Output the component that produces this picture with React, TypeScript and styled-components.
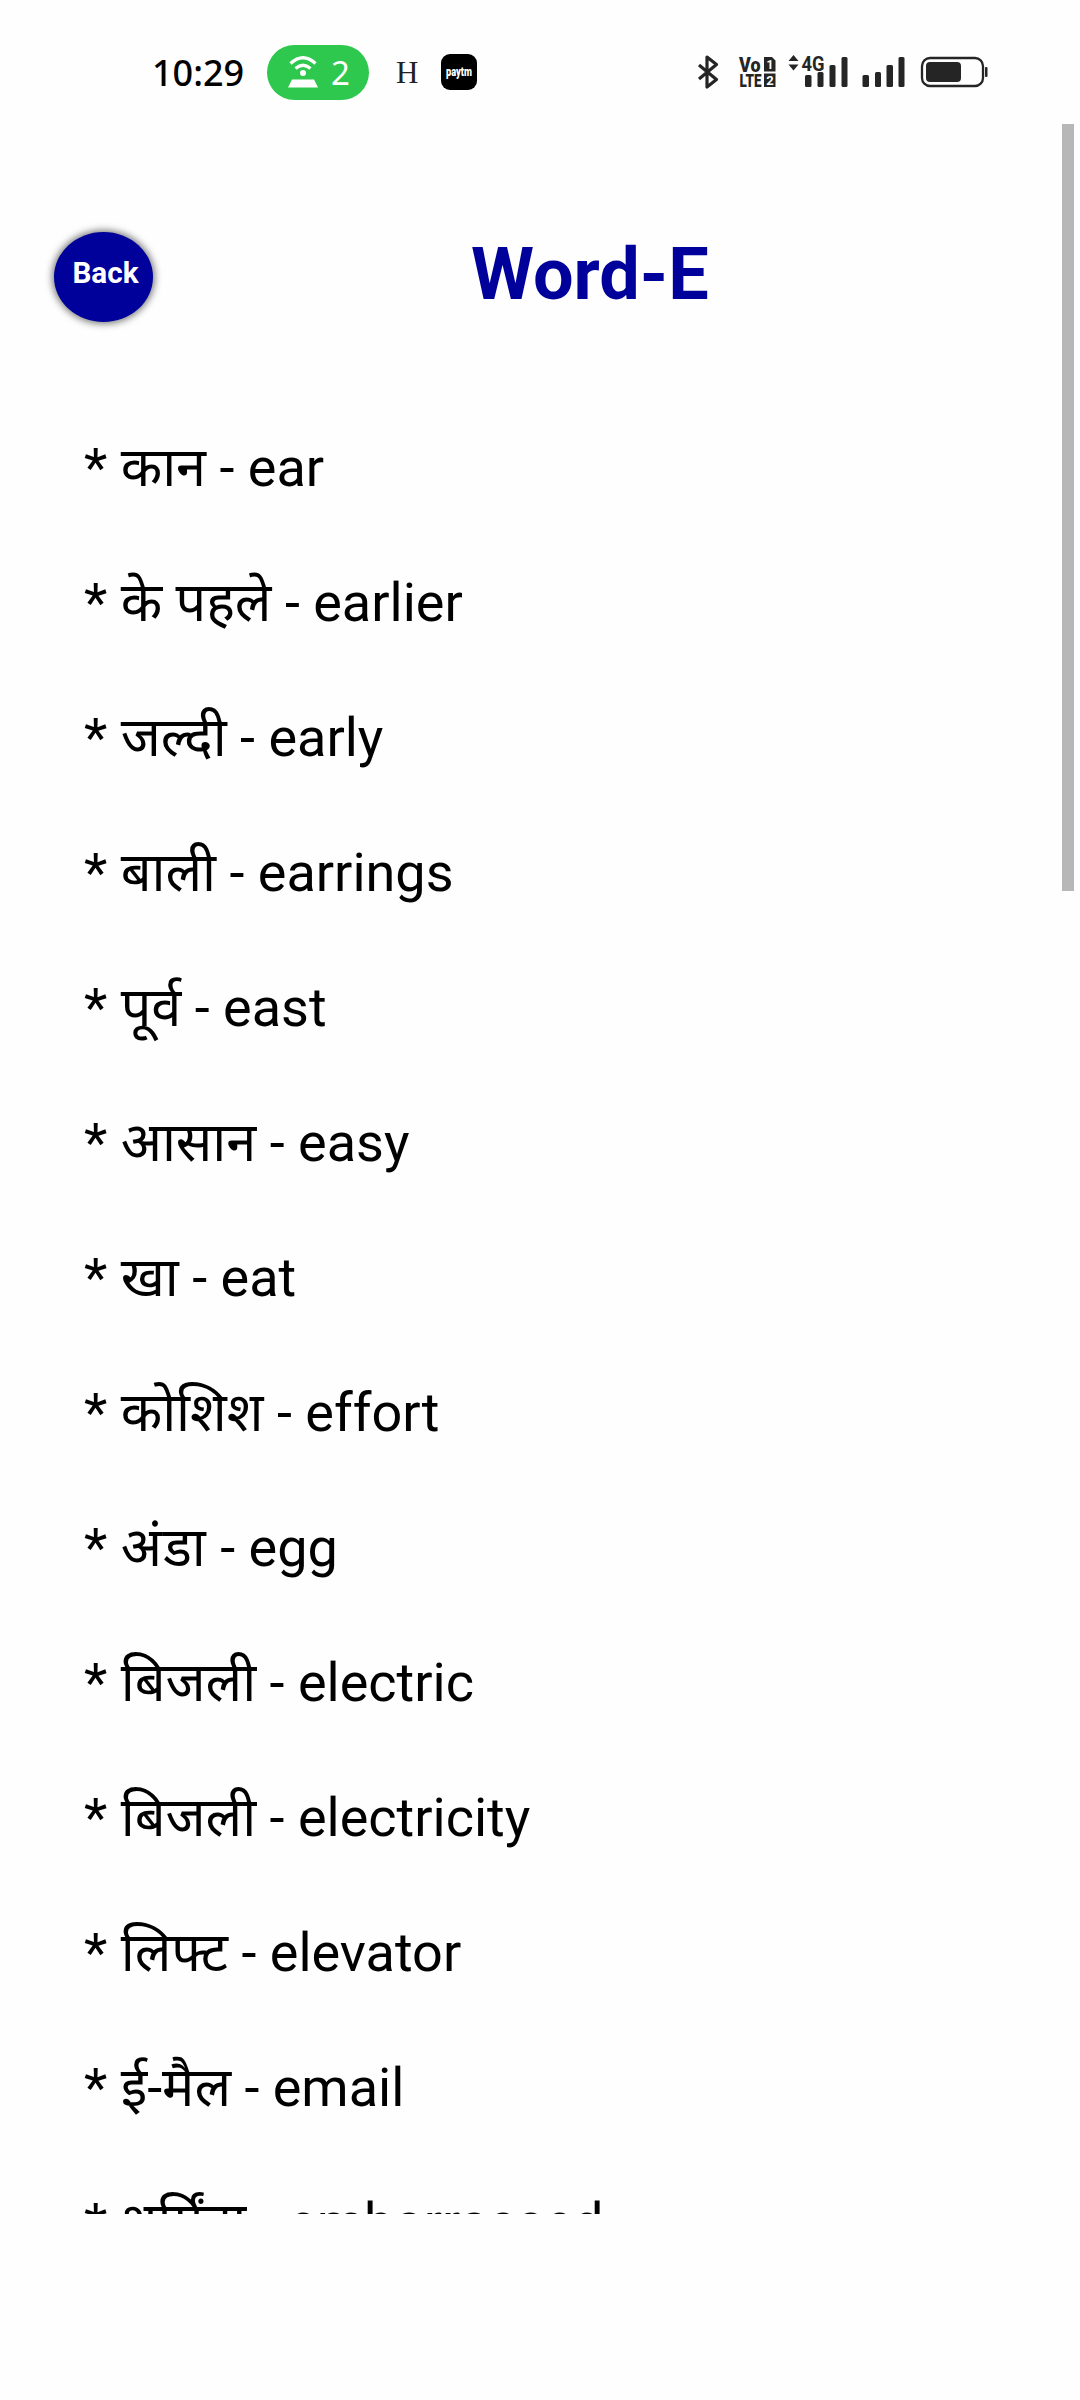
import React from "react";
import styled, { createGlobalStyle } from "styled-components";

const GlobalStyle = createGlobalStyle`
  * { box-sizing: border-box; }
  body { margin: 0; background: #fefefe; }
`;

const Screen = styled.div`
  display: flex;
  flex-direction: column;
  width: 1080px;
  height: 2400px;
  overflow: hidden;
  background: #fefefe;
  color: #000;
  font-family: Roboto, "Noto Sans", "Noto Sans Devanagari", sans-serif;
`;

const StatusBar = styled.header`
  display: flex;
  justify-content: space-between;
  height: 124px;
  padding: 45px 91px 0 152px;
`;

const StatusGroup = styled.div`
  display: flex;
  align-items: center;
  height: 54px;
`;

const Clock = styled.span`
  width: 95px;
  padding-top: 1px;
  font: 500 36px/54px "Noto Sans", sans-serif;
  white-space: nowrap;
`;

const HotspotPill = styled.span`
  display: flex;
  align-items: center;
  width: 102px;
  height: 55px;
  margin-left: 20px;
  padding-left: 20px;
  gap: 12px;
  border-radius: 28px;
  background: #2dc84d;
  color: #fff;
  font: 400 33px/55px "Noto Sans", sans-serif;
`;

const LetterBadge = styled.span`
  width: 24px;
  margin-left: 27px;
  padding-top: 1px;
  font: 400 31px/54px "Liberation Serif", serif;
  color: #222;
`;

const PaytmBadge = styled.span`
  display: flex;
  align-items: center;
  justify-content: center;
  width: 36px;
  height: 36px;
  margin-left: 21px;
  border-radius: 9px;
  background: #000;
`;

const Main = styled.main`
  display: flex;
  height: 2090px;
  overflow: hidden;
`;

const Content = styled.div`
  flex: 1;
`;

const ScrollThumb = styled.div`
  width: 12px;
  height: 767px;
  margin-right: 6px;
  background: #b7b7b7;
`;

const TitleRow = styled.div`
  display: flex;
  align-items: flex-start;
  height: 276px;
  padding: 108px 0 0 54px;
`;

const BackButton = styled.button`
  width: 99px;
  height: 90px;
  padding: 0 0 8px 4px;
  border: 0;
  border-radius: 50%;
  background: #00009b;
  box-shadow: 0 0 7px 2px rgba(0, 0, 0, 0.5);
  color: #fff;
  font: 700 29.7px/80px Roboto, sans-serif;
`;

const Title = styled.h1`
  margin: 0 0 0 318px;
  color: #00009b;
  font: 700 72px/86px Roboto, sans-serif;
  white-space: nowrap;
`;

const WordList = styled.ul`
  margin: 0;
  padding: 0 0 0 84px;
  list-style: none;
`;

const WordRow = styled.li`
  height: 135px;
  font-size: 54px;
  line-height: 135px;
  white-space: nowrap;
`;

const Hindi = styled.span<{ $tracking?: number }>`
  letter-spacing: ${({ $tracking }) => ($tracking ? `${$tracking}px` : "normal")};
`;

const words: { hindi: string; english: string; tracking?: number }[] = [
  { hindi: "कान", english: "ear" },
  { hindi: "के पहले", english: "earlier" },
  { hindi: "जल्दी", english: "early" },
  { hindi: "बाली", english: "earrings" },
  { hindi: "पूर्व", english: "east" },
  { hindi: "आसान", english: "easy" },
  { hindi: "खा", english: "eat" },
  { hindi: "कोशिश", english: "effort" },
  { hindi: "अंडा", english: "egg", tracking: 1 },
  { hindi: "बिजली", english: "electric" },
  { hindi: "बिजली", english: "electricity" },
  { hindi: "लिफ्ट", english: "elevator" },
  { hindi: "ई-मैल", english: "email" },
  { hindi: "शर्मिंदा", english: "embarrassed" },
];

const HotspotIcon = () => (
  <svg width="32" height="34" viewBox="0 0 32 34" fill="none" stroke="#fff" strokeWidth="3.2">
    <path d="M3.500 8.500Q16-3 28.500 8.500M8.500 13.500Q16 7 23.500 13.500" />
    <circle cx="16" cy="18" r="3" fill="#fff" stroke="none" />
    <path d="M5 24.500H27L31 32.500H1Z" fill="#fff" stroke="none" />
  </svg>
);

const PaytmLogo = () => (
  <svg width="36" height="36" viewBox="0 0 36 36" fill="#fff">
    <text
      x="5"
      y="21.500"
      fontFamily="Roboto, sans-serif"
      fontWeight="900"
      fontSize="12.500"
      textLength="26"
      lengthAdjust="spacingAndGlyphs"
    >
      paytm
    </text>
  </svg>
);

const StatusIcons = () => (
  <svg width="293" height="40" viewBox="696 52 293 40" fill="#252525">
    <path
      d="M699 65L716.500 79.500L707 87V57L716.500 64.500L699 79"
      fill="none"
      stroke="#252525"
      strokeWidth="3.200"
      strokeLinejoin="round"
    />
    <g fontFamily="Roboto, sans-serif" fontWeight="900">
      <text x="739" y="71.500" fontSize="20" textLength="21.500" lengthAdjust="spacingAndGlyphs">Vo</text>
      <text x="739.500" y="87" fontSize="19" textLength="22" lengthAdjust="spacingAndGlyphs">LTE</text>
    </g>
    <path d="M764 57H772L775.500 60.500V71.500H764ZM764 73.500H775.500V87H764Z" />
    <g fontFamily="Roboto, sans-serif" fontWeight="700" fill="#fff">
      <text x="766.500" y="68.500" fontSize="12">1</text>
      <text x="766.200" y="85" fontSize="13">2</text>
    </g>
    <path d="M788.500 61L793.500 55L798.500 61ZM788.500 64.500L793.500 70.500L798.500 64.500Z" />
    <text x="801.500" y="70.500" fontFamily="Roboto, sans-serif" fontWeight="700" fontSize="21" textLength="23" lengthAdjust="spacingAndGlyphs">4G</text>
    <rect x="805" y="75" width="6.500" height="12" rx="1.500" />
    <rect x="817.500" y="72" width="6" height="15" rx="1.500" />
    <rect x="829.500" y="65" width="6" height="22" rx="1.500" />
    <rect x="841.500" y="57" width="6" height="30" rx="1.500" />
    <rect x="862.500" y="75" width="6.500" height="12" rx="1.500" />
    <rect x="875" y="72" width="6" height="15" rx="1.500" />
    <rect x="886.500" y="65" width="6.500" height="22" rx="1.500" />
    <rect x="898.500" y="57" width="6" height="30" rx="1.500" />
    <rect x="922" y="58" width="61" height="28" rx="8" fill="none" stroke="#252525" strokeWidth="2.300" />
    <rect x="926" y="62" width="35" height="20" rx="4" />
    <rect x="985" y="67" width="2.500" height="10" rx="1" />
  </svg>
);

export default function App() {
  return (
    <Screen>
      <GlobalStyle />
      <StatusBar>
        <StatusGroup>
          <Clock>10:29</Clock>
          <HotspotPill>
            <HotspotIcon />2
          </HotspotPill>
          <LetterBadge>H</LetterBadge>
          <PaytmBadge>
            <PaytmLogo />
          </PaytmBadge>
        </StatusGroup>
        <StatusGroup>
          <StatusIcons />
        </StatusGroup>
      </StatusBar>
      <Main>
        <Content>
          <TitleRow>
            <BackButton>Back</BackButton>
            <Title>Word-E</Title>
          </TitleRow>
          <WordList>
            {words.map(({ hindi, english, tracking }) => (
              <WordRow key={english}>
                * <Hindi $tracking={tracking}>{hindi}</Hindi> - {english}
              </WordRow>
            ))}
          </WordList>
        </Content>
        <ScrollThumb />
      </Main>
    </Screen>
  );
}
